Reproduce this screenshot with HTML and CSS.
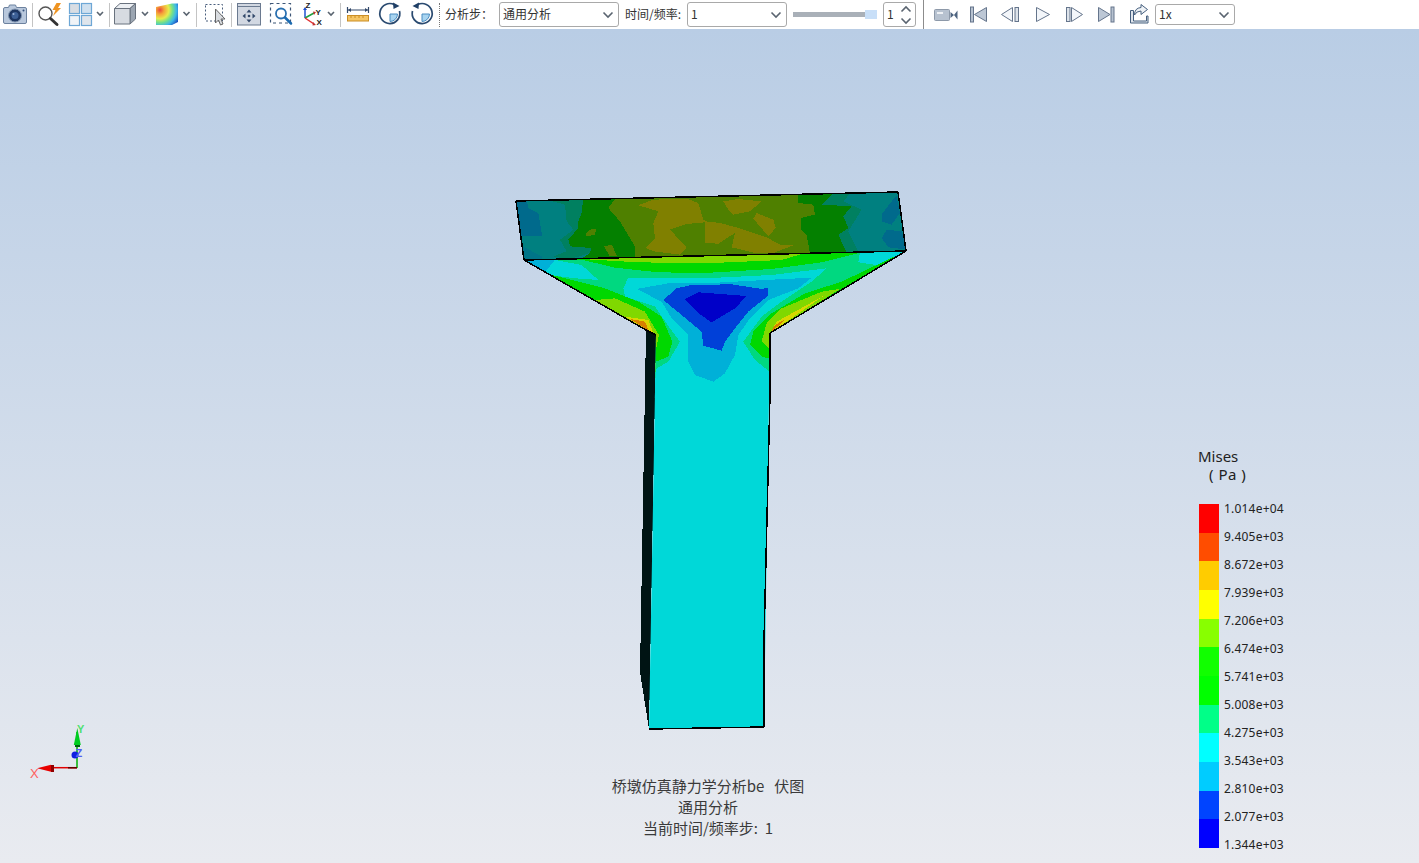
FILE: index.html
```html
<!DOCTYPE html>
<html lang="zh">
<head>
<meta charset="utf-8">
<title>桥墩仿真静力学分析</title>
<link rel="stylesheet" href="styles.css">
</head>
<body>
<div class="app">
  <header class="toolbar">
    <svg width="32" height="29" viewBox="0 0 32 29"><path class="ic-cam" d="M5 7.500h3.500l1-2.500h6l1 2.500H25q1.500 0 1.500 1.500v13q0 1.500-1.500 1.500H5q-1.500 0-1.500-1.500V9q0-1.500 1.500-1.500z"/><circle cx="15" cy="15.500" r="6.500" fill="#1d3560" stroke="#7f93ae"/><circle cx="15" cy="15.500" r="3.500" fill="#3c5f95"/><circle cx="13.500" cy="14" r="1" fill="#9db4d6"/><circle cx="23.500" cy="10.500" r="1" fill="#33507a"/></svg>
    <i class="sep"></i>
    <svg width="33" height="29" viewBox="33 0 33 29"><circle cx="45.500" cy="13.500" r="6.500" fill="#fff" stroke="#555" stroke-width="1.400"/><path d="M50.500 18.500l6.500 6" stroke="#333" stroke-width="3" stroke-linecap="round"/><path d="M56.500 3l-4 7h3l-2.500 6 8-8h-3l3-5z" fill="#ef9422"/></svg>
    <svg width="27" height="29" viewBox="66 0 27 29"><g stroke="#6da7d6" stroke-width="1.200"><rect x="69.500" y="3.500" width="10" height="10" fill="#d9dde3"/><rect x="81.500" y="3.500" width="10" height="10" fill="#cfe0ef"/><rect x="69.500" y="15.500" width="10" height="10" fill="#f0f3f7"/><rect x="81.500" y="15.500" width="10" height="10" fill="#dfe5ec"/></g></svg>
    <svg class="chev" width="16" height="29" viewBox="93 0 16 29"><path d="M97 12l3 3 3-3"/></svg>
    <i class="sep"></i>
    <svg width="28" height="29" viewBox="110 0 28 29"><g stroke="#69727e" stroke-linejoin="round"><path d="M114.500 8.500L120 3.500h15.500L130 8.500z" fill="#eceff3"/><path d="M130 8.500l5.500-5V19l-5.500 5z" fill="#9ca6b2"/><path d="M114.500 8.500H130V24h-15.500z" fill="#d7dbe1"/></g></svg>
    <svg class="chev" width="14" height="29" viewBox="138 0 14 29"><path d="M142 12l3 3 3-3"/></svg>
    <svg width="28" height="29" viewBox="152 0 28 29"><defs><radialGradient id="heat" gradientUnits="userSpaceOnUse" cx="160" cy="10" r="21"><stop offset="0" stop-color="#e8453a"/><stop offset=".2" stop-color="#f5a53a"/><stop offset=".42" stop-color="#e6ec4c"/><stop offset=".6" stop-color="#74e08a"/><stop offset=".78" stop-color="#3cb8e8"/><stop offset="1" stop-color="#1a4fc0"/></radialGradient></defs><path d="M156 7l16-3.500h6V22l-6 3h-16z" fill="url(#heat)"/></svg>
    <svg class="chev" width="16" height="29" viewBox="180 0 16 29"><path d="M183.500 12l3 3 3-3"/></svg>
    <i class="sep"></i>
    <svg width="34" height="29" viewBox="197 0 34 29"><rect x="205.500" y="4.500" width="17" height="16.500" fill="none" stroke="#4a5f7d" stroke-dasharray="2 2"/><path d="M215.500 9v14l3-3 2 5 2.500-1-2-5h4z" fill="#d9dce0" stroke="#666"/></svg>
    <i class="sep"></i>
    <svg width="33" height="29" viewBox="232 0 33 29"><rect x="237.500" y="3.500" width="23" height="21.500" fill="#d2d8e2" stroke="#6b7a90"/><path d="M238 6.500h22" stroke="#6b7a90"/><path d="M249 9.500l2.500 3h-5zM249 22.500l2.500-3h-5zM242.500 16l3-2.500v5zM255.500 16l-3-2.500v5z" fill="#33496b"/><circle cx="249" cy="16" r="1.300" fill="#33496b"/></svg>
    <svg width="33" height="29" viewBox="265 0 33 29"><rect x="270.500" y="3.500" width="20" height="19.500" fill="none" stroke="#3d5677" stroke-width="1.200" stroke-dasharray="3 3"/><circle cx="281" cy="13.500" r="5" fill="#fff" stroke="#2a70b0" stroke-width="1.800"/><path d="M285 17.500l6 6" stroke="#1b6ab0" stroke-width="2.500" stroke-linecap="round"/></svg>
    <svg width="26" height="29" viewBox="298 0 26 29"><path d="M305 18V9" stroke="#2050d0" stroke-width="1.500"/><path d="M303 10l2-3 2 3z" fill="#2050d0"/><path d="M305 18l9-5" stroke="#20a040" stroke-width="1.500"/><path d="M305 18l9 6" stroke="#e03030" stroke-width="1.500"/><path d="M313 11.500l3 .5-2 3zM313 22l3 3-3.500.5z" fill="#c03030"/><text class="axis-t" x="305.500" y="8">Z</text><text class="axis-t" x="315.500" y="15">Y</text><text class="axis-t" x="316.500" y="25">X</text></svg>
    <svg class="chev" width="16" height="29" viewBox="324 0 16 29"><path d="M328 12l3 3 3-3"/></svg>
    <i class="sep"></i>
    <svg width="33" height="29" viewBox="341 0 33 29"><path d="M347.500 7v6M368.500 7v6M348 10h20" stroke="#33496b" stroke-width="1.200"/><path d="M348 10l3-2v4zM368 10l-3-2v4z" fill="#33496b"/><rect x="347.500" y="15.500" width="21" height="5.500" fill="#f5c565" stroke="#cb8e25"/><path d="M351 16v2M355 16v2M359 16v2M363 16v2" stroke="#cb8e25"/></svg>
    <svg width="33" height="29" viewBox="374 0 33 29"><path d="M390 14h7.500a7.500 7.500 0 0 1-7.500 7.500z" fill="#a8d4f0" stroke="#4a8cc0"/><path d="M394.500 4.700A10 10 0 1 0 399.500 11" fill="none" stroke="#2a4a70" stroke-width="1.700"/><path d="M393 2.500l6.500 3.500-6 3z" fill="#1f3f66"/></svg>
    <svg width="32" height="29" viewBox="407 0 32 29"><path d="M422 14h7.500a7.500 7.500 0 0 1-7.500 7.500z" fill="#a8d4f0" stroke="#4a8cc0"/><path d="M417.500 4.700A10 10 0 1 1 412.500 11" fill="none" stroke="#2a4a70" stroke-width="1.700"/><path d="M419 2.500l-6.500 3.500 6 3z" fill="#1f3f66"/></svg>
    <i class="sep-dot"></i>
    <span class="label label-step">分析步：</span>
    <div class="combo combo-step"><span>通用分析</span><svg class="chev" width="12" height="8" viewBox="0 0 12 8"><path d="M1.500 1.500L6 6l4.500-4.500"/></svg></div>
    <span class="label label-time">时间/频率:</span>
    <div class="combo combo-time"><span>1</span><svg class="chev" width="12" height="8" viewBox="0 0 12 8"><path d="M1.500 1.500L6 6l4.500-4.500"/></svg></div>
    <div class="slider"><i class="slider-track"></i><i class="slider-thumb"></i></div>
    <div class="combo spin"><span>1</span><svg class="chev" width="12" height="20" viewBox="0 0 12 20"><path d="M1.500 6.500L6 2l4.500 4.500M1.500 13.500L6 18l4.500-4.500"/></svg></div>
    <i class="sep-dark"></i>
    <svg width="45" height="29" viewBox="924 0 45 29"><rect x="934.500" y="9.500" width="15" height="11" rx="1" fill="#b7c2d0" stroke="#8d99a9"/><rect x="937" y="12" width="6" height="2" fill="#eef1f5"/><path d="M950.500 12l3.500 3-3.500 3zM957.500 10.500v9l-3.500-4.500z" fill="#4e6480"/></svg>
    <svg width="32" height="29" viewBox="969 0 32 29"><rect x="970.500" y="7" width="3" height="15" fill="#b7c2d0" stroke="#65758c"/><path d="M986.500 7.500l-12 7 12 7z" fill="#bcc7d5" stroke="#65758c"/></svg>
    <svg width="33" height="29" viewBox="1001 0 33 29"><path d="M1012.500 7.500l-11 7 11 7z" fill="#f3f6fa" stroke="#65758c"/><rect x="1015" y="7.500" width="3.500" height="14" fill="#dde3ea" stroke="#65758c"/></svg>
    <svg width="32" height="29" viewBox="1034 0 32 29"><path d="M1036.500 7.500l13 7-13 7z" fill="#f3f6fa" stroke="#65758c"/></svg>
    <svg width="32" height="29" viewBox="1066 0 32 29"><rect x="1066.500" y="7.500" width="3.500" height="14" fill="#dde3ea" stroke="#65758c"/><path d="M1071.500 7.500l11 7-11 7z" fill="#f3f6fa" stroke="#65758c"/></svg>
    <svg width="31" height="29" viewBox="1098 0 31 29"><path d="M1098.500 7.500l11.500 7-11.500 7z" fill="#bcc7d5" stroke="#65758c"/><rect x="1111" y="7" width="3" height="15" fill="#b7c2d0" stroke="#65758c"/></svg>
    <svg width="26" height="29" viewBox="1129 0 26 29"><path d="M1130.500 10.500h3v10.500h13v-5h1.500v7h-17.500z" fill="#dfe5ec" stroke="#47607f"/><path d="M1134.500 15q0-7 6.500-7.500V4.500l6.500 5-6.500 5V11q-4.500 0-6.500 4z" fill="#eef2f6" stroke="#47607f"/></svg>
    <div class="combo combo-speed"><span>1x</span><svg class="chev" width="12" height="8" viewBox="0 0 12 8"><path d="M1.500 1.500L6 6l4.500-4.500"/></svg></div>
  </header>

  <main class="view">
    <svg class="scene" viewBox="0 29 1419 834" width="1419" height="834" shape-rendering="crispEdges">
      <defs>
        <clipPath id="plate"><polygon points="516,201 898,192 906,251 524,260"/></clipPath>
        <clipPath id="tee"><polygon points="524,260 906,251 770,333 764,727 649,729 656,335"/></clipPath>
      </defs>

      <!-- side face -->
      <polygon points="646,330 656,335 649,729 640,672" fill="#001414"/>

      <!-- top plate contours -->
      <g clip-path="url(#plate)">
        <rect x="510" y="185" width="400" height="80" fill="#008080"/>
        <g transform="translate(510 188) scale(.3333)">
          <polygon fill="#006a8c" points="20,40 50,38 55,60 85,75 97,145 35,145 25,100"/>
          <polygon fill="#007588" points="38,175 95,205 100,218 42,220"/>
          <polygon fill="#008060" points="120,38 220,30 215,75 205,100 205,120 175,155 180,175 245,180 240,195 175,215 130,205 170,190 150,155 190,125 170,100 165,50"/>
          <polygon fill="#048000" points="220,30 320,26 295,60 330,100 375,175 375,210 210,215 240,195 245,180 180,175 175,155 205,120 205,100 215,75"/>
          <polygon fill="#4f8000" points="320,26 620,18 620,208 375,212 375,175 330,100 295,60"/>
          <polygon fill="#808000" points="385,52 430,35 530,32 565,45 580,95 620,100 530,108 480,125 530,178 510,200 430,190 408,180 435,150 430,105 445,70"/>
          <polygon fill="#4f8000" points="228,138 240,125 258,122 255,140 230,145"/>
          <polygon fill="#4f8000" points="282,175 305,170 322,205 300,205"/>
        </g>
        <g transform="translate(705 188) scale(.3333)">
          <polygon fill="#4f8000" points="0,15 350,8 350,200 0,205"/>
          <polygon fill="#808000" points="55,40 100,33 170,40 135,70 85,80 70,65"/>
          <polygon fill="#808000" points="155,75 205,95 212,120 190,145 145,92"/>
          <polygon fill="#808000" points="0,100 45,105 100,120 185,148 225,170 265,172 205,195 150,195 80,178 90,135 40,167 0,165"/>
          <polygon fill="#048000" points="280,12 390,10 350,50 440,55 415,85 430,120 400,140 425,195 315,198 305,140 288,125 288,90 330,80 325,50 280,45"/>
          <polygon fill="#008060" points="390,10 440,10 415,40 470,65 430,130 460,192 425,195 400,140 430,120 415,85 440,55 350,50"/>
          <polygon fill="#006a8c" points="560,40 575,25 585,75 560,110 530,100 530,80"/>
          <polygon fill="#006a8c" points="545,125 590,130 605,185 550,178 530,150"/>
        </g>
      </g>

      <!-- flange and column contours -->
      <g clip-path="url(#tee)">
        <rect x="510" y="245" width="400" height="490" fill="#00d8d8"/>
        <g transform="translate(505 185) scale(.3333)">
          <polygon fill="#00d800" points="50,225 1210,195 800,445 800,580 450,580 450,450"/>
          <polygon fill="#80d800" points="230,222 900,204 830,225 600,235 400,232"/>
          <polygon fill="#80d800" points="270,345 330,340 420,380 462,450 453,495 450,450 420,436"/>
          <polygon fill="#d8d800" points="360,395 430,405 447,450 425,436"/>
          <polygon fill="#d88000" points="375,402 420,410 432,438"/>
          <polygon fill="#80d800" points="1005,312 950,320 830,370 785,415 770,470 798,495 798,445"/>
          <polygon fill="#d8d800" points="795,445 815,410 955,333"/>
          <polygon fill="#d88000" points="795,445 810,420 845,400"/>
          <polygon fill="#00d880" points="150,226 230,224 330,248 460,262 600,264 800,252 950,232 1065,203 1115,240 1010,290 900,325 800,385 745,440 735,480 770,515 800,522 800,570 700,590 453,552 453,530 490,515 502,470 470,395 400,350 300,310 140,270"/>
          <polygon fill="#00d8d8" points="150,225 230,240 280,285 210,280 135,270 100,250"/>
          <polygon fill="#00d8d8" points="370,278 600,280 800,270 965,250 920,290 830,350 770,395 715,470 750,525 800,565 800,640 440,640 453,552 490,530 525,470 495,430 450,365 360,335 355,310"/>
          <polygon fill="#00d8d8" points="1065,203 1210,195 1115,240 1060,232"/>
          <polygon fill="#00b0d8" points="55,226 150,224 120,262"/>
          <polygon fill="#00b0d8" points="395,312 490,295 600,295 780,285 920,278 880,310 790,345 735,400 700,450 690,510 660,565 625,590 570,570 550,530 550,450 500,400 470,350"/>
          <polygon fill="#0040d8" points="475,345 515,310 560,300 680,298 770,312 790,308 790,332 730,380 690,430 660,470 650,497 595,482 590,440 530,390"/>
          <polygon fill="#0000c8" points="538,343 580,322 725,333 690,370 620,412 580,385"/>
        </g>
      </g>

      <!-- edges -->
      <g fill="none" stroke="#000" stroke-width="1.500" stroke-linejoin="bevel">
        <polygon points="516,201 898,192 906,251 524,260"/>
        <polyline points="524,260 646,330 656,335"/>
        <polyline points="906,251 770,333 770,395 764,640 764,727 649,729"/>
      </g>

      <!-- axis triad -->
      <g shape-rendering="auto">
        <path d="M77 768V732" stroke="#00b000" stroke-width="1.500"/>
        <path d="M77.300 728l-3.500 17h7z" fill="#00cc20"/>
        <path d="M75 745h5v2h-5z" fill="#006010"/>
        <circle cx="75" cy="755" r="3.500" fill="#1020e0"/>
        <text class="tri tri-z" x="75.500" y="757">Z</text>
        <path d="M77 767.700H50" stroke="#e00000" stroke-width="1.500"/>
        <path d="M37 768.300l14-3.500v7z" fill="#e80000"/>
        <path d="M51 765h3v7h-3z" fill="#900000"/>
        <path d="M68 767h9v1.500h-9z" fill="#600000"/>
        <text class="tri tri-y" x="77" y="733">Y</text>
        <text class="tri tri-x" x="30" y="778">X</text>
      </g>
    </svg>

    <section class="legend">
      <div class="legend-title">Mises</div>
      <div class="legend-unit">( Pa )</div>
      <div class="legend-body">
        <div class="swatches">
          <i class="c1"></i><i class="c2"></i><i class="c3"></i><i class="c4"></i><i class="c5"></i><i class="c6"></i><i class="c7"></i><i class="c8"></i><i class="c9"></i><i class="c10"></i><i class="c11"></i><i class="c12"></i>
        </div>
        <div class="values">
          <span>1.014e+04</span><span>9.405e+03</span><span>8.672e+03</span><span>7.939e+03</span><span>7.206e+03</span><span>6.474e+03</span><span>5.741e+03</span><span>5.008e+03</span><span>4.275e+03</span><span>3.543e+03</span><span>2.810e+03</span><span>2.077e+03</span><span>1.344e+03</span>
        </div>
      </div>
    </section>

    <section class="caption">
      <div class="caption-line">桥墩仿真静力学分析be   伏图</div>
      <div class="caption-line">通用分析</div>
      <div class="caption-line">当前时间/频率步:  1</div>
    </section>
  </main>
</div>
</body>
</html>
```
FILE: styles.css
```css
* { box-sizing: border-box; }
html, body { margin: 0; height: 100%; overflow: hidden; }
body { font-family: "Noto Sans CJK SC", "Noto Sans", sans-serif; color: #333; background: #fff; }
.app { display: flex; flex-direction: column; width: 1419px; height: 863px; }

.toolbar { display: flex; align-items: center; height: 29px; flex: none; background: #fff; font-size: 12px; }
.toolbar svg { flex: none; display: block; }
.ic-cam { fill: #b9c8dc; stroke: #6d829f; }
.chev path { fill: none; stroke: #5a6470; stroke-width: 1.600; }
.axis-t { font: 700 8px "Liberation Sans", sans-serif; fill: #222; }
.sep { flex: none; width: 1px; height: 24px; background: #c4c4c4; }
.sep-dot { flex: none; width: 1px; height: 24px; border-left: 1px dotted #777; }
.sep-dark { flex: none; width: 1px; height: 29px; margin: 0 0 0 7px; background: #8c8c8c; }

.label { flex: none; color: #333; white-space: nowrap; padding-bottom: 2px; }
.label-step { width: 54px; margin-left: 5px; }
.label-time { width: 56px; margin-left: 6px; }

.combo { flex: none; display: flex; align-items: center; justify-content: space-between; height: 25px; padding: 0 4px 0 3px; border: 1px solid #a9a9a9; border-radius: 3px; background: #fff; color: #333; }
.combo span { padding-bottom: 2px; }
.combo-step { width: 120px; }
.combo-time { width: 100px; margin-left: 6px; }
.combo-speed { width: 80px; height: 21px; }
.spin { width: 33px; padding: 0 3px 0 3px; margin-left: 6px; }

.slider { flex: none; display: flex; align-items: center; width: 84px; margin-left: 6px; }
.slider-track { display: block; width: 72px; height: 5px; background: #a9b0b8; }
.slider-thumb { display: block; width: 12px; height: 9px; background: #c8dff8; }

.view { position: relative; flex: 1; background: linear-gradient(#b9cde5, #e9ebf0); overflow: hidden; }
.scene { position: absolute; left: 0; top: 0; display: block; }
.tri { font: 700 11px "Liberation Sans", sans-serif; }
.tri-y { fill: #50e070; }
.tri-z { fill: #5060f0; }
.tri-x { fill: #ff6060; font-weight: 400; font-size: 13px; }

.legend { position: absolute; left: 1198px; top: 418px; font-family: "Noto Sans", sans-serif; color: #222; }
.legend-title { font-size: 15px; line-height: 18px; }
.legend-unit { font-size: 15px; line-height: 18px; padding-left: 11px; letter-spacing: .5px; white-space: pre; }
.legend-body { display: flex; margin-top: 21px; }
.swatches { display: grid; grid-template-rows: repeat(12, 28.670px); width: 21px; padding-left: 1px; }
.swatches i { display: block; }
.values { display: grid; grid-template-rows: repeat(13, 28px); margin: -9px 0 0 5px; font-size: 12px; line-height: 28px; letter-spacing: .2px; white-space: nowrap; }
.c1 { background: #ff0000; }
.c2 { background: #ff4d00; }
.c3 { background: #ffcc00; }
.c4 { background: #ffff00; }
.c5 { background: #88ff00; }
.c6 { background: #11ff00; }
.c7 { background: #00ff00; }
.c8 { background: #00ff88; }
.c9 { background: #00ffff; }
.c10 { background: #00ccff; }
.c11 { background: #0044ff; }
.c12 { background: #0000ff; }

.caption { position: absolute; left: 558px; top: 746px; width: 300px; text-align: center; font-size: 15px; line-height: 21px; color: #3a3a3a; }
.caption-line { white-space: pre; }
```
